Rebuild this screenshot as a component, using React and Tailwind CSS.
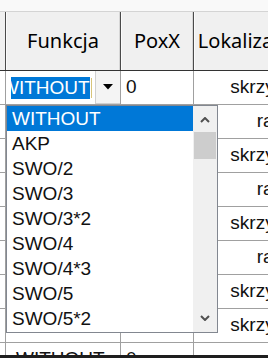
import React from "react";

const options = ["WITHOUT", "AKP", "SWO/2", "SWO/3", "SWO/3*2", "SWO/4", "SWO/4*3", "SWO/5", "SWO/5*2"];

// rows behind the open dropdown: only the Lokalizacja column shows
const rows = [
  { fn: "WITHOUT", x: "0", loc: "skrzynia" },
  { fn: "WITHOUT", x: "0", loc: "rama" },
  { fn: "WITHOUT", x: "0", loc: "skrzynia" },
  { fn: "WITHOUT", x: "0", loc: "rama" },
  { fn: "WITHOUT", x: "0", loc: "skrzynia" },
  { fn: "WITHOUT", x: "0", loc: "rama" },
  { fn: "WITHOUT", x: "0", loc: "skrzynia" },
  { fn: "WITHOUT", x: "0", loc: "skrzynia" },
  { fn: "WITHOUT", x: "0", loc: "rama" },
];

function Chevron({ up }) {
  return (
    <svg width="10" height="6" viewBox="0 0 10 6" className="block">
      <path
        d={up ? "M1 5 L5 1 L9 5" : "M1 1 L5 5 L9 1"}
        fill="none"
        stroke="#505050"
        strokeWidth="2"
      />
    </svg>
  );
}

function HeaderCell({ w, children }) {
  return (
    <div
      className={`${w} shrink-0 h-full flex items-center justify-center border-r border-[#4a4a4a] shadow-[inset_-1px_0_0_#d6d6d6,inset_1px_0_0_#fbfbfb] bg-[#f0f0f0] text-[20px] text-black font-['Noto_Sans',sans-serif] overflow-hidden whitespace-nowrap`}
    >
      {children}
    </div>
  );
}

export default function App() {
  return (
    <div className="w-[268px] h-[358px] flex flex-col overflow-hidden bg-white font-['Liberation_Sans',Arial,sans-serif] text-[19px] text-[#111]">
      <div className="relative flex-1 overflow-hidden">
        <div className="h-[12px] bg-[#f9f9f9] border-b border-[#d4d4d4]" />

        {/* column headers */}
        <div className="flex h-[59px] border-b border-[#333]">
          <div className="w-[6px] shrink-0 h-full bg-[#f0f0f0] border-r border-[#4a4a4a]" />
          <HeaderCell w="w-[115px]">Funkcja</HeaderCell>
          <HeaderCell w="w-[73px]">PoxX</HeaderCell>
          <HeaderCell w="w-[110px]">Lokalizacja</HeaderCell>
        </div>

        {/* body rows */}
        {rows.map((r, i) => (
          <div key={i} className="flex h-[34px] border-b border-[#a0a0a0] whitespace-nowrap">
            <div className="w-[6px] shrink-0 border-r border-[#a0a0a0]" />
            <div className="w-[115px] shrink-0 border-r border-[#a0a0a0] flex items-center overflow-hidden">
              {i === 0 ? (
                <div className="flex h-full w-full items-center">
                  <div className="ml-[5px] w-[79px] h-[22px] overflow-hidden shrink-0">
                    <div className="w-max ml-[-10px] leading-[22px] bg-[#0078d7] text-white">{r.fn}</div>
                  </div>
                  <div className="w-[1px] h-[20px] bg-[#d8c47a] ml-[1px]" />
                  <div className="ml-auto w-[25px] h-full bg-[#f4f4f4] border-l border-b border-[#d0d0d0] flex items-center justify-center">
                    <svg width="10" height="6" viewBox="0 0 10 6" className="block">
                      <path d="M0 0 H10 L5 5.5 Z" fill="#000" />
                    </svg>
                  </div>
                </div>
              ) : (
                <span className="pl-[10px]">{r.fn}</span>
              )}
            </div>
            <div className="w-[73px] shrink-0 border-r border-[#a0a0a0] flex items-center pl-[5px]">{r.x}</div>
            <div className="w-[110px] shrink-0 flex items-center justify-end pr-[4px]">{r.loc}</div>
          </div>
        ))}

        {/* open dropdown list */}
        <div className="absolute left-[6px] top-[105px] w-[212px] h-[228px] border border-[#828790] bg-white flex">
          <div className="w-[186px] flex flex-col">
            {options.map((o, i) => (
              <div
                key={o}
                className={`h-[25px] leading-[25px] pl-[5px] whitespace-nowrap ${i === 0 ? "bg-[#0078d7] text-white" : "text-[#111]"}`}
              >
                {o}
              </div>
            ))}
          </div>
          <div className="w-[24px] h-full bg-[#f0f0f0] flex flex-col">
            <div className="h-[26px] flex items-center justify-center pt-[2px]">
              <Chevron up />
            </div>
            <div className="mx-[1px] h-[27px] bg-[#cdcdcd]" />
            <div className="flex-1" />
            <div className="h-[26px] flex items-center justify-center pb-[3px]">
              <Chevron />
            </div>
          </div>
        </div>
      </div>
      <div className="h-[3px] bg-[#1e1e1e]" />
    </div>
  );
}
